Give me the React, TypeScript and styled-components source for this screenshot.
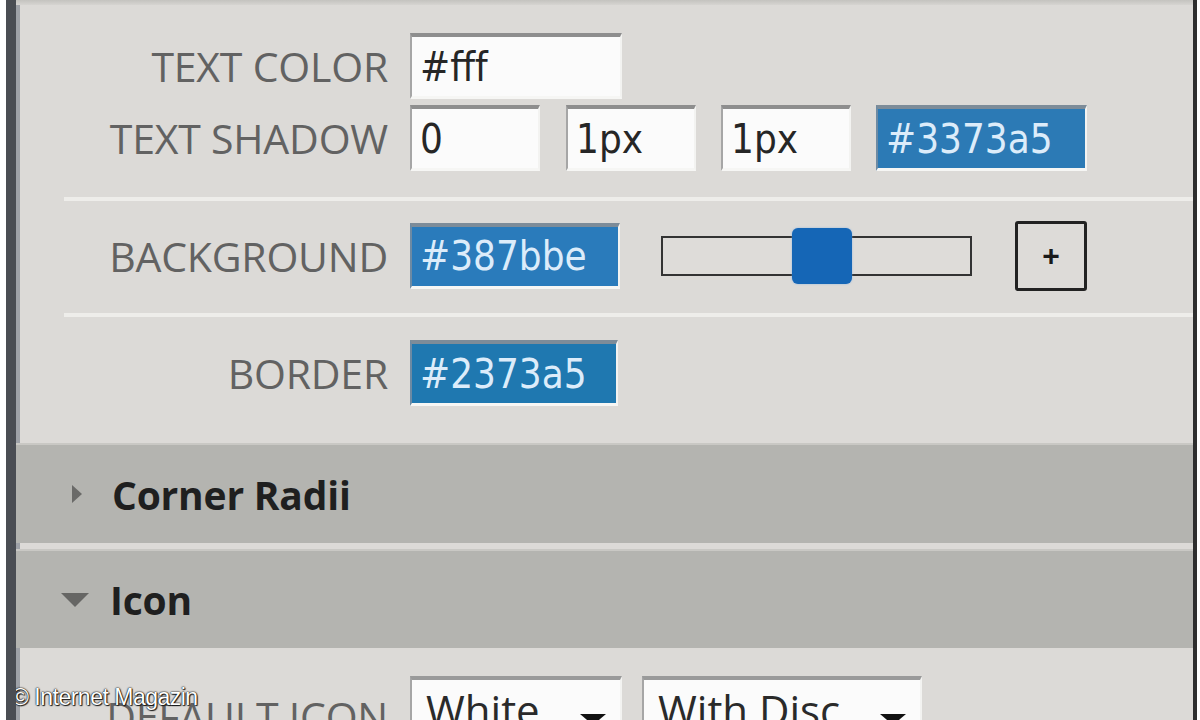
import * as React from 'react';
import styled, { createGlobalStyle } from 'styled-components';

const GlobalStyle = createGlobalStyle`
	html, body {
		margin: 0;
		padding: 0;
		background: #ffffff;
		overflow: hidden;
	}
	body {
		width: 1200px;
		height: 720px;
	}
`;

const Frame = styled.div`
	position: relative;
	margin-left: 6px;
	width: 1177px;
	height: 720px;
	border-left: 10px solid #4a4d53;
	border-right: 4px solid #2e2e2e;
	box-shadow: inset 4px 0 0 #9ea1a7;
	background-color: #dcdad7;
	display: flex;
	flex-direction: column;
	overflow: hidden;
	font-family: 'Open Sans', 'Noto Sans', sans-serif;

	& > * {
		flex-shrink: 0;
	}
`;

const TopStrip = styled.div`
	height: 5px;
	background: linear-gradient(#c4c3bf, #d6d4d1);
`;

const Section = styled.div`
	display: flex;
	flex-direction: column;
	padding: 27px 0 37px 0;
`;

const Row = styled.div<{ h: number; mt?: number }>`
	display: grid;
	grid-template-columns: 372px 1fr;
	column-gap: 22px;
	align-items: center;
	height: ${({ h }) => h}px;
	margin-top: ${({ mt }) => mt || 0}px;
	flex-shrink: 0;
`;

const Label = styled.div`
	text-align: right;
	font-size: 41px;
	color: #626262;
	letter-spacing: -0.2px;
	white-space: nowrap;
`;

const Controls = styled.div`
	display: flex;
	align-items: center;
`;

const Field = styled.div<{ w: number; blue?: string; gap?: number }>`
	box-sizing: border-box;
	width: ${({ w }) => w}px;
	height: 66px;
	margin-right: ${({ gap }) => gap || 0}px;
	display: flex;
	align-items: center;
	padding-left: 8px;
	background-color: ${({ blue }) => blue || '#fbfbfb'};
	border-top: 4px solid ${({ blue }) => (blue ? '#7d8c99' : '#8e8e8e')};
	border-left: 2px solid ${({ blue }) => (blue ? '#6d8aa3' : '#a6a6a6')};
	border-right: 2px solid #f3f3f1;
	border-bottom: 3px solid #f6f6f4;
	font-family: 'DejaVu Sans Condensed', 'DejaVu Sans', sans-serif;
	font-stretch: condensed;
	font-size: 40px;
	color: ${({ blue }) => (blue ? '#dcecfa' : '#262626')};
	white-space: nowrap;
`;

const Divider = styled.div<{ mt: number; mb: number }>`
	height: 4px;
	margin: ${({ mt, mb }) => `${mt}px 0 ${mb}px 48px`};
	background-color: #eeedea;
	flex-shrink: 0;
`;

const Track = styled.div`
	position: relative;
	box-sizing: border-box;
	width: 311px;
	height: 40px;
	margin: 0 43px 0 41px;
	border: 2px solid #333333;
	background-color: #dedcd9;
`;

const Thumb = styled.div`
	position: absolute;
	left: 129px;
	top: -10px;
	width: 60px;
	height: 56px;
	border-radius: 6px;
	background-color: #1566b6;
	box-shadow: 0 0 2px rgba(120, 170, 230, 0.8);
`;

const PlusButton = styled.div`
	box-sizing: border-box;
	width: 72px;
	height: 70px;
	border: 3px solid #222222;
	border-radius: 3px;
	display: flex;
	align-items: center;
	justify-content: center;
	font-family: 'Liberation Sans', sans-serif;
	font-weight: bold;
	font-size: 30px;
	color: #1a1a1a;
	background-color: #dddbd8;
`;

const Header = styled.div<{ first?: boolean }>`
	height: ${({ first }) => (first ? 100 : 99)}px;
	background-color: #b4b4b0;
	border-top: 2px solid #c9c8c4;
	margin-bottom: ${({ first }) => (first ? 6 : 0)}px;
	display: flex;
	align-items: center;
	padding-left: 44px;
	box-sizing: border-box;
`;

const Caret = styled.div<{ open?: boolean }>`
	width: 30px;
	display: flex;
	justify-content: center;
	margin-right: 20px;
	margin-left: ${({ open }) => (open ? 0 : 2)}px;
`;

const HeaderTitle = styled.div`
	font-weight: 700;
	font-size: 39px;
	color: #1f1f1f;
	letter-spacing: -0.2px;
`;

const Bottom = styled.div`
	padding-top: 28px;
`;

const Select = styled(Field)`
	height: 80px;
	justify-content: space-between;
	padding: 0 14px 0 14px;
	align-items: flex-end;
	font-family: 'Open Sans', 'Noto Sans', sans-serif;
	font-stretch: normal;
	font-size: 42px;
	line-height: 1;
	color: #2a2a2a;
	border-top: 4px solid #9a9a9a;
`;

const SelectText = styled.span`
	margin-bottom: 22px;
`;

const Arrow = styled.span`
	display: inline-block;
	width: 0;
	height: 0;
	margin-bottom: 28px;
	border-left: 13px solid transparent;
	border-right: 13px solid transparent;
	border-top: 11px solid #111111;
`;

const Watermark = styled.div`
	position: absolute;
	left: -4px;
	bottom: 9px;
	font-family: 'Liberation Sans', Arial, sans-serif;
	font-size: 23px;
	color: #ffffff;
	letter-spacing: -0.5px;
	text-shadow: 0 0 2px #000, 0 0 1px #000, 1px 1px 1px #222;
`;

const RightTriangle = () => (
	<svg width="14" height="22" viewBox="0 0 14 22">
		<path d="M2 2 L12 11 L2 20 Z" fill="#6a6a68" />
	</svg>
);

const DownTriangle = () => (
	<svg width="30" height="16" viewBox="0 0 30 16">
		<path d="M1 1 L29 1 L15 15 Z" fill="#666664" />
	</svg>
);

export default function App() {
	return (
		<>
			<GlobalStyle />
			<Frame>
				<TopStrip />
				<Section>
					<Row h={68}>
						<Label>TEXT COLOR</Label>
						<Controls>
							<Field w={212}>#fff</Field>
						</Controls>
					</Row>
					<Row h={68} mt={4}>
						<Label>TEXT SHADOW</Label>
						<Controls>
							<Field w={130} gap={26}>0</Field>
							<Field w={130} gap={25}>1px</Field>
							<Field w={130} gap={25}>1px</Field>
							<Field w={211} blue="#2c7ab5">#3373a5</Field>
						</Controls>
					</Row>
					<Divider mt={25} mb={19} />
					<Row h={71}>
						<Label>BACKGROUND</Label>
						<Controls>
							<Field w={210} blue="#2a7bbb">#387bbe</Field>
							<Track>
								<Thumb />
							</Track>
							<PlusButton>+</PlusButton>
						</Controls>
					</Row>
					<Divider mt={22} mb={23} />
					<Row h={66}>
						<Label>BORDER</Label>
						<Controls>
							<Field w={208} blue="#1f78b0">#2373a5</Field>
						</Controls>
					</Row>
				</Section>
				<Header first>
					<Caret>
						<RightTriangle />
					</Caret>
					<HeaderTitle>Corner Radii</HeaderTitle>
				</Header>
				<Header>
					<Caret open>
						<DownTriangle />
					</Caret>
					<HeaderTitle>Icon</HeaderTitle>
				</Header>
				<Bottom>
					<Row h={80}>
						<Label>DEFAULT ICON</Label>
						<Controls>
							<Select w={212} gap={20}>
								<SelectText>White</SelectText>
								<Arrow />
							</Select>
							<Select w={280}>
								<SelectText>With Disc</SelectText>
								<Arrow />
							</Select>
						</Controls>
					</Row>
				</Bottom>
				<Watermark>© Internet Magazin</Watermark>
			</Frame>
		</>
	);
}
